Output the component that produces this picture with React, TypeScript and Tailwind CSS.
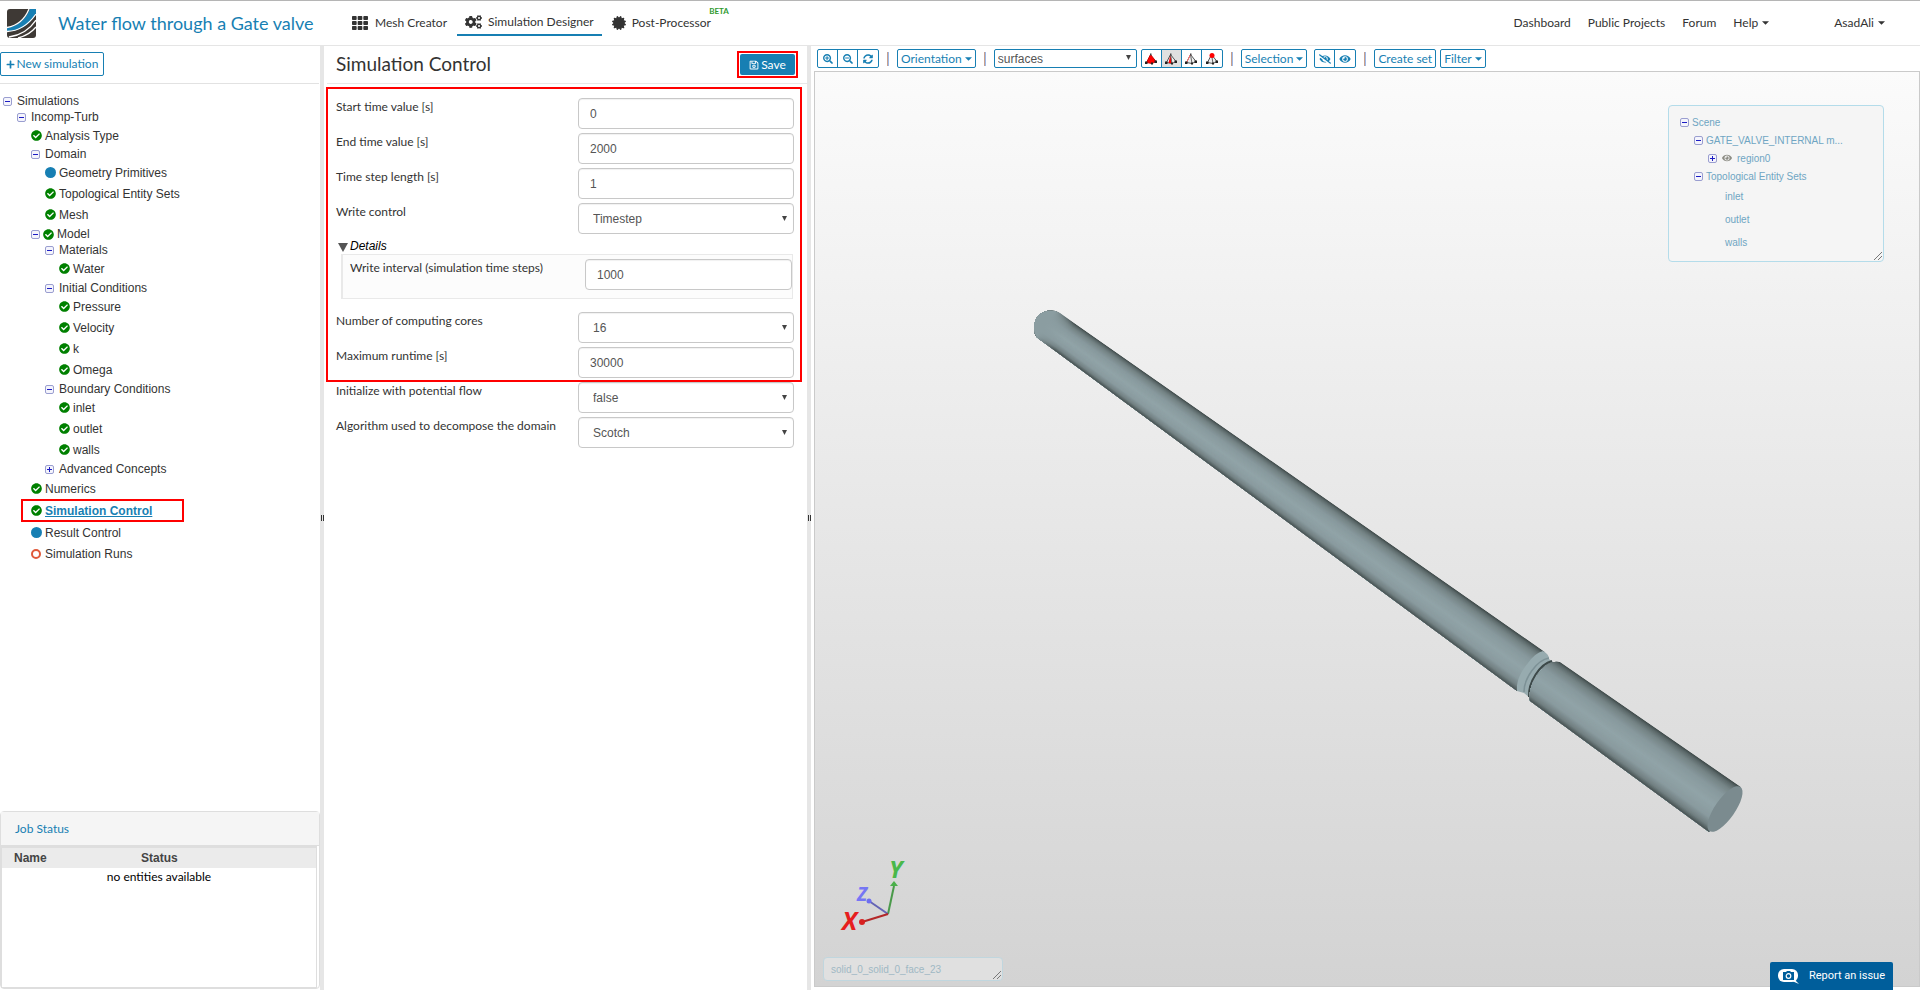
import { useState } from 'react';
import type { ReactNode } from 'react';
import {
  FaCertificate,
  FaCheckCircle,
  FaCogs,
  FaEye,
  FaEyeSlash,
  FaPlus,
  FaRegSave,
  FaSearchMinus,
  FaSearchPlus,
  FaSyncAlt,
  FaTh,
} from 'react-icons/fa';

type Status = 'ok' | 'info' | 'open';

interface TreeItem {
  label: string;
  status?: Status;
  toggle?: 'open' | 'closed';
  active?: boolean;
  children?: TreeItem[];
}

const leaf = (label: string, status: Status = 'ok'): TreeItem => ({ label, status });

const simulationTree: TreeItem[] = [
  {
    label: 'Simulations',
    toggle: 'open',
    children: [
      {
        label: 'Incomp-Turb',
        toggle: 'open',
        children: [
          leaf('Analysis Type'),
          {
            label: 'Domain',
            toggle: 'open',
            children: [leaf('Geometry Primitives', 'info'), leaf('Topological Entity Sets'), leaf('Mesh')],
          },
          {
            label: 'Model',
            toggle: 'open',
            status: 'ok',
            children: [
              { label: 'Materials', toggle: 'open', children: [leaf('Water')] },
              {
                label: 'Initial Conditions',
                toggle: 'open',
                children: [leaf('Pressure'), leaf('Velocity'), leaf('k'), leaf('Omega')],
              },
              {
                label: 'Boundary Conditions',
                toggle: 'open',
                children: [leaf('inlet'), leaf('outlet'), leaf('walls')],
              },
              { label: 'Advanced Concepts', toggle: 'closed' },
            ],
          },
          leaf('Numerics'),
          { label: 'Simulation Control', status: 'ok', active: true },
          leaf('Result Control', 'info'),
          leaf('Simulation Runs', 'open'),
        ],
      },
    ],
  },
];

function Caret() {
  return (
    <svg viewBox="0 0 8 4" className="w-[7px] h-1 shrink-0" fill="currentColor">
      <path d="M0 0h8L4 4z" />
    </svg>
  );
}

function ToggleIcon({ closed = false }: { closed?: boolean }) {
  return (
    <svg viewBox="0 0 9 9" className="w-[9px] h-[9px] shrink-0">
      <rect x="0.5" y="0.5" width="8" height="8" rx="1.5" fill="#f4f4fc" stroke="#9a9ed0" />
      <path d="M2 4.5h5" stroke="#1c1cc4" />
      {closed && <path d="M4.5 2v5" stroke="#1c1cc4" />}
    </svg>
  );
}

function StatusIcon({ status }: { status: Status }) {
  if (status === 'ok') return <FaCheckCircle className="w-[11px] h-[11px] shrink-0 text-[#008000]" />;
  if (status === 'info') return <span className="w-[11px] h-[11px] shrink-0 rounded-full bg-[#177fb3]" />;
  return <span className="w-[10px] h-[10px] mr-px shrink-0 rounded-full border-2 border-[#e0593a]" />;
}

function TreeNode({ item }: { item: TreeItem }) {
  const isBranch = Boolean(item.toggle);
  return (
    <li>
      {isBranch ? (
        <div className="flex items-center h-4">
          <ToggleIcon closed={item.toggle === 'closed'} />
          {item.status ? (
            <span className="flex items-center gap-[3px] ml-[3px]">
              <StatusIcon status={item.status} />
              {item.label}
            </span>
          ) : (
            <span className="ml-[5px]">{item.label}</span>
          )}
        </div>
      ) : item.active ? (
        <div className="flex items-center h-[23px] w-[163px] -ml-2.5 border-2 border-[#ff0000]">
          <a href="#control" className="flex items-center gap-[3px] ml-2 font-bold text-[#177fb3] underline">
            <StatusIcon status="ok" />
            {item.label}
          </a>
        </div>
      ) : (
        <div className="flex items-center gap-[3px] h-[21px]">
          {item.status && <StatusIcon status={item.status} />}
          {item.label}
        </div>
      )}
      {item.children && (
        <ul className="pl-3.5 pb-px">
          {item.children.map((child) => (
            <TreeNode key={child.label} item={child} />
          ))}
        </ul>
      )}
    </li>
  );
}

function Logo() {
  return (
    <svg viewBox="0 0 29 29" className="w-[29px] h-[29px]">
      <rect width="29" height="29" rx="3" fill="#3e3935" />
      <path d="M0 19C11 17 19 10 23 0h6v4C23 16 12 23 0 22z" fill="#177fb3" />
      <path d="M0 18.500C11 16.500 18 10 22 0" fill="none" stroke="#fff" strokeWidth="1.300" />
      <path d="M0 22.500C13 22 22 15 29 5" fill="none" stroke="#fff" strokeWidth="1.300" />
      <path d="M2 28C15 26 23 20 29 11" fill="none" stroke="#fff" strokeWidth="1.300" />
      <path d="M11 29C19 27 25 23 29 18" fill="none" stroke="#fff" strokeWidth="1.300" />
    </svg>
  );
}

function Header() {
  return (
    <header className="flex items-center h-[46px] shrink-0 border-t border-t-[#b5b5b5] border-b border-b-[#e5e5e5] pl-[7px] text-[#333]">
      <Logo />
      <h1 className="ml-[22px] w-[294px] text-[18px] text-[#177fb3]">Water flow through a Gate valve</h1>
      <nav className="flex items-center text-[12px]">
        <a href="#mesh" className="flex items-center gap-[7px] mr-2.5">
          <FaTh className="w-4 h-4" />
          Mesh Creator
        </a>
        <a href="#designer" className="flex items-center gap-1.5 h-[22px] mt-1 pb-1 px-2 border-b-2 border-[#177fb3]">
          <FaCogs className="w-[17px] h-4" />
          Simulation Designer
        </a>
        <a href="#post" className="relative flex items-center gap-1.5 ml-2.5">
          <FaCertificate className="w-[14px] h-[14px]" />
          Post-Processor
          <span className="absolute -right-[18px] -top-[7px] text-[8px] leading-none font-bold text-[#2f9a2f]">BETA</span>
        </a>
      </nav>
      <nav className="flex items-center gap-[17px] ml-auto mr-[35px] text-[12px]">
        <a href="#dashboard">Dashboard</a>
        <a href="#projects">Public Projects</a>
        <a href="#forum">Forum</a>
        <button type="button" className="flex items-center gap-1">
          Help <Caret />
        </button>
        <button type="button" className="flex items-center gap-1 ml-12">
          AsadAli <Caret />
        </button>
      </nav>
    </header>
  );
}

function Splitter() {
  return (
    <div className="flex items-center justify-end gap-px w-1 shrink-0 bg-[#e6e6e6]">
      <span className="w-px h-1.5 bg-[#333]" />
      <span className="w-px h-1.5 bg-[#333]" />
    </div>
  );
}

function Sidebar() {
  return (
    <aside className="flex flex-col w-80 shrink-0">
      <div className="h-[38px] pt-1.5 border-b border-[#e2e2e2] mr-px">
        <button
          type="button"
          className="flex items-center justify-center gap-0.5 w-[104px] h-6 rounded-xs border border-[#177fb3] text-[12px] text-[#177fb3]"
        >
          <FaPlus className="w-[9px] h-[9px]" />
          New simulation
        </button>
      </div>
      <ul className="flex-1 min-h-0 overflow-hidden pl-[3px] pt-[9px] font-['Liberation_Sans',Arial,sans-serif] text-[12px] text-[#333]">
        {simulationTree.map((item) => (
          <TreeNode key={item.label} item={item} />
        ))}
      </ul>
      <section className="flex flex-col h-[178px] shrink-0 mb-px border border-[#dedede] rounded-sm text-[12px]">
        <h2 className="flex items-center h-[34px] pl-3.5 bg-[#f5f5f5] border-b border-[#dedede] text-[#177fb3]">Job Status</h2>
        <div className="flex-1 mr-0.5 border border-t-2 border-[#dedede]">
          <table className="w-full text-left">
            <thead className="h-5 bg-[#ebebeb] font-['Liberation_Sans',Arial,sans-serif] text-[#444]">
              <tr>
                <th className="w-[127px] pl-3">Name</th>
                <th className="pl-3">Status</th>
              </tr>
            </thead>
            <tbody>
              <tr>
                <td colSpan={2} className="text-center">
                  no entities available
                </td>
              </tr>
            </tbody>
          </table>
        </div>
      </section>
    </aside>
  );
}

const fieldClass =
  "w-full h-[31px] rounded border border-[#c8c8c8] bg-white font-['Liberation_Sans',Arial,sans-serif] text-[12px] text-[#555] shadow-[inset_0_1px_1px_rgba(0,0,0,0.06)]";

interface FieldProps {
  id: string;
  label: string;
  value: string;
  options?: boolean;
  nested?: boolean;
}

function Field({ id, label, value, options = false, nested = false }: FieldProps) {
  return (
    <div className="flex items-start justify-between">
      <label htmlFor={id} className="leading-[18px]">
        {label}
      </label>
      <div className={nested ? 'relative w-[207px]' : 'relative w-[216px]'}>
        {options ? (
          <>
            <select id={id} defaultValue={value} className={`${fieldClass} appearance-none pl-3.5`}>
              <option>{value}</option>
            </select>
            <svg viewBox="0 0 5 5" className="absolute right-[7px] top-[13px] w-[5px] h-[5px]">
              <path d="M0 0h5L2.5 5z" fill="#444" />
            </svg>
          </>
        ) : (
          <input id={id} type="text" defaultValue={value} className={`${fieldClass} pl-[11px]`} />
        )}
      </div>
    </div>
  );
}

function ControlPanel() {
  return (
    <main className="w-[483px] shrink-0 text-[12px] text-[#333]">
      <div className="flex items-center justify-between h-[38px] ml-[3px] pl-[9px] pr-[9px] border-b border-[#e8e8e8]">
        <h2 className="text-[19px]">Simulation Control</h2>
        <div className="border-2 border-[#ff0000] p-px">
          <button
            type="button"
            className="flex items-center justify-center gap-0.5 w-[55px] h-[21px] rounded-xs bg-[#177fb3] text-white"
          >
            <FaRegSave className="w-2.5 h-2.5" />
            Save
          </button>
        </div>
      </div>
      <form>
        <div className="flex flex-col gap-1 mt-[3px] ml-0.5 mr-[5px] pt-[9px] pb-0.5 pl-2 pr-[6px] border-2 border-[#ff0000]">
          <Field id="start" label="Start time value [s]" value="0" />
          <Field id="end" label="End time value [s]" value="2000" />
          <Field id="step" label="Time step length [s]" value="1" />
          <Field id="write" label="Write control" value="Timestep" options />
          <details open className="mb-[9px]">
            <summary className="flex items-center gap-0.5 h-4 pl-0.5 list-none font-['Liberation_Sans',Arial,sans-serif] italic text-black">
              <svg viewBox="0 0 10 9" className="w-2.5 h-[9px] mt-0.5">
                <path d="M0 0h10L5 9z" fill="#555" />
              </svg>
              Details
            </summary>
            <div className="ml-[5px] mr-px h-[45px] pt-1 pl-[7px] bg-[#fcfcfc] border border-l-2 border-[#e9e9e9]">
              <Field id="interval" label="Write interval (simulation time steps)" value="1000" nested />
            </div>
          </details>
          <Field id="cores" label="Number of computing cores" value="16" options />
          <Field id="runtime" label="Maximum runtime [s]" value="30000" />
        </div>
        <div className="flex flex-col gap-1 pl-3 pr-[13px]">
          <Field id="potential" label="Initialize with potential flow" value="false" options />
          <Field id="algorithm" label="Algorithm used to decompose the domain" value="Scotch" options />
        </div>
      </form>
    </main>
  );
}

type Highlight = 'volume' | 'face' | 'edge' | 'vertex';

function PickIcon({ kind }: { kind: Highlight }) {
  return (
    <svg viewBox="0 0 12 12" className="w-3 h-3">
      <path
        d="M5.5 1.5L1.5 9.5L7 10.500L11 8.500z"
        fill={kind === 'volume' ? '#f00' : '#eee'}
        stroke={kind === 'volume' ? '#c00' : '#555'}
        strokeWidth="1"
      />
      {kind === 'face' && <path d="M5.5 1.5L3.5 10L7 10.500z" fill="#f00" />}
      <path d="M5.5 1.5L7 10.500" stroke={kind === 'volume' ? '#f00' : '#666'} strokeWidth="1" />
      {kind === 'edge' && <path d="M5.5 1.5L1.5 9.5" stroke="#f66" />}
      <path d="M0 8.500h2.500v2.500H0zM6 9.500h2v2H6zM9.500 7.500h2.500v2.500h-2.500z" fill="#222" />
      {kind === 'vertex' ? <circle cx="6" cy="2.500" r="2.500" fill="#f00" /> : <path d="M5 0.500h1.500v2H5z" fill="#444" />}
    </svg>
  );
}

function ButtonGroup({ children }: { children: ReactNode }) {
  return (
    <div className="flex h-[19px] rounded-xs border border-[#177fb3] divide-x divide-[#177fb3] text-[#177fb3]">{children}</div>
  );
}

function IconButton({ label, pressed = false, children }: { label: string; pressed?: boolean; children: ReactNode }) {
  return (
    <button
      type="button"
      aria-label={label}
      className={`flex items-center justify-center w-5 ${pressed ? 'bg-[#e0e0e0]' : ''}`}
    >
      {children}
    </button>
  );
}

function TextButton({ children }: { children: ReactNode }) {
  return (
    <button
      type="button"
      className="flex items-center gap-[3px] h-[19px] px-[3px] rounded-xs border border-[#177fb3] text-[#177fb3] whitespace-nowrap"
    >
      {children}
    </button>
  );
}

function Separator() {
  return <span className="w-0.5 h-3.5 mx-2 border-l border-l-[#c9a08c] border-r border-r-[#9bb8e8]" />;
}

function Toolbar() {
  return (
    <div className="flex items-center h-[25px] pl-1.5 text-[12px]">
      <ButtonGroup>
        <IconButton label="Zoom in">
          <FaSearchPlus className="w-2.5 h-2.5" />
        </IconButton>
        <IconButton label="Zoom out">
          <FaSearchMinus className="w-2.5 h-2.5" />
        </IconButton>
        <IconButton label="Reset view">
          <FaSyncAlt className="w-2.5 h-2.5" />
        </IconButton>
      </ButtonGroup>
      <Separator />
      <TextButton>
        Orientation <Caret />
      </TextButton>
      <Separator />
      <div className="relative mr-1">
        <select
          aria-label="Render mode"
          defaultValue="surfaces"
          className="appearance-none block w-[143px] h-[19px] pl-[3px] rounded-xs border border-[#177fb3] bg-white font-['Liberation_Sans',Arial,sans-serif] text-[12px] text-[#555]"
        >
          <option>surfaces</option>
        </select>
        <svg viewBox="0 0 5 5" className="absolute right-1.5 top-1.5 w-[5px] h-[5px]">
          <path d="M0 0h5L2.500 5z" fill="#444" />
        </svg>
      </div>
      <ButtonGroup>
        <IconButton label="Pick volume">
          <PickIcon kind="volume" />
        </IconButton>
        <IconButton label="Pick face" pressed>
          <PickIcon kind="face" />
        </IconButton>
        <IconButton label="Pick edge">
          <PickIcon kind="edge" />
        </IconButton>
        <IconButton label="Pick vertex">
          <PickIcon kind="vertex" />
        </IconButton>
      </ButtonGroup>
      <Separator />
      <TextButton>
        Selection <Caret />
      </TextButton>
      <div className="ml-[7px]">
        <ButtonGroup>
          <IconButton label="Hide selection">
            <FaEyeSlash className="w-3 h-2.5" />
          </IconButton>
          <IconButton label="Show all">
            <FaEye className="w-3 h-2.5" />
          </IconButton>
        </ButtonGroup>
      </div>
      <Separator />
      <div className="flex gap-1">
        <TextButton>Create set</TextButton>
        <TextButton>
          Filter <Caret />
        </TextButton>
      </div>
    </div>
  );
}

type Point = [number, number];

const shadeStops: [number, number[]][] = [
  [0, [66, 77, 77]],
  [0.05, [92, 105, 106]],
  [0.14, [117, 132, 134]],
  [0.3, [136, 153, 157]],
  [0.55, [145, 164, 168]],
  [0.78, [138, 155, 159]],
  [0.92, [114, 128, 130]],
  [1, [76, 87, 88]],
];

function shade(t: number) {
  const i = Math.max(1, shadeStops.findIndex(([stop]) => stop >= t));
  const [t0, a] = shadeStops[i - 1];
  const [t1, b] = shadeStops[i];
  const k = (t - t0) / (t1 - t0);
  return `rgb(${a.map((c, n) => Math.round(c + (b[n] - c) * k)).join(',')})`;
}

// each strip runs down to the lower edge, the next one is painted over it
function Pipe({ top, bottom }: { top: [Point, Point]; bottom: [Point, Point] }) {
  const steps = 48;
  const at = (side: 0 | 1, t: number) =>
    `${top[side][0] + (bottom[side][0] - top[side][0]) * t},${top[side][1] + (bottom[side][1] - top[side][1]) * t}`;
  return (
    <g>
      {Array.from({ length: steps }, (_, i) => (
        <polygon
          key={i}
          points={`${at(0, i / steps)} ${at(1, i / steps)} ${at(1, 1)} ${at(0, 1)}`}
          fill={shade(i / (steps - 1))}
        />
      ))}
    </g>
  );
}

function Model() {
  return (
    <svg viewBox="815 72 1104 914" className="absolute inset-0 w-full h-full">
      <defs>
        <clipPath id="narrow">
          <path d="M1060 313L1545 652L1517 691L1040 340C1037 338 1034 335 1034 328C1034 312 1050 307 1060 313z" />
        </clipPath>
        <clipPath id="wide">
          <path d="M1560 662L1741 787L1709 832L1530 701C1528 690 1534 678 1541 671Q1549 660 1560 662z" />
        </clipPath>
        <linearGradient id="cap" gradientUnits="userSpaceOnUse" x1="1047" y1="322" x2="1066" y2="336">
          <stop offset="0" stopColor="#8b9da1" />
          <stop offset="1" stopColor="#8b9da1" stopOpacity="0" />
        </linearGradient>
      </defs>
      <g clipPath="url(#narrow)">
        <Pipe top={[[1027, 290], [1545, 652]]} bottom={[[1008, 316], [1517, 691]]} />
        <rect x="1030" y="300" width="60" height="60" fill="url(#cap)" />
      </g>
      <path d="M1543 651Q1549 654 1549 659L1553 662L1530 698L1524 693L1517 691C1516 680 1522 670 1528 663Q1535 653 1543 651z" fill="#97abaf" />
      <path d="M1549 658C1537 660 1524 678 1524 692" fill="none" stroke="#7d9196" strokeWidth="1.500" />
      <path d="M1552 661C1540 664 1528 682 1529 697" fill="none" stroke="#3d4949" strokeWidth="2" />
      <g clipPath="url(#wide)">
        <Pipe top={[[1530, 641], [1741, 787]]} bottom={[[1500, 679], [1709, 832]]} />
      </g>
      <ellipse cx="1725" cy="809" rx="27" ry="10" transform="rotate(-55 1725 809)" fill="#7b8b8f" />

      <g strokeWidth="2" fontFamily="'Open Sans', sans-serif" fontWeight="bold" fontStyle="italic">
        <path d="M888 914L894 886" stroke="#4a9a4a" />
        <path d="M890 886L894 881L898 886z" fill="#4ab04a" />
        <path d="M888 914L869 901" stroke="#6464b4" />
        <circle cx="869" cy="901" r="2.500" fill="#6e6ef0" />
        <path d="M888 914L862 922" stroke="#b42828" />
        <circle cx="862" cy="922" r="3" fill="#d82020" />
        <text x="889" y="878" fontSize="24" fill="#4ab84a">Y</text>
        <text x="857" y="901" fontSize="19" fill="#7676f4">Z</text>
        <text x="842" y="930" fontSize="25" fill="#e61e1e">X</text>
      </g>
    </svg>
  );
}

function Grip() {
  return (
    <svg viewBox="0 0 8 8" className="absolute right-px bottom-px w-2 h-2" stroke="#777">
      <path d="M0 8L8 0M4 8L8 4" />
    </svg>
  );
}

function ScenePanel() {
  return (
    <div className="absolute right-[35px] top-[33px] w-[216px] h-[157px] rounded border border-[#b4dcea] bg-[#f5f5f5] pl-[11px] pt-2 font-['Liberation_Sans',Arial,sans-serif] text-[10px] text-[#6fa5c3]">
      <div className="flex items-center gap-[3px] h-[17px]">
        <ToggleIcon /> Scene
      </div>
      <div className="flex items-center gap-[3px] h-[18px] pl-3.5">
        <ToggleIcon /> GATE_VALVE_INTERNAL m...
      </div>
      <div className="flex items-center h-[18px] pl-7">
        <ToggleIcon closed />
        <FaEye className="w-2.5 h-2.5 ml-[5px] mr-[5px] text-[#8d8d85]" />
        region0
      </div>
      <div className="flex items-center gap-[3px] h-[18px] pl-3.5">
        <ToggleIcon /> Topological Entity Sets
      </div>
      <ul className="pl-[45px] leading-[23px]">
        <li>inlet</li>
        <li>outlet</li>
        <li>walls</li>
      </ul>
      <Grip />
    </div>
  );
}

function Viewer() {
  const [picked] = useState('solid_0_solid_0_face_23');
  return (
    <section className="flex flex-col flex-1 min-w-0">
      <Toolbar />
      <div className="relative flex-1 ml-[3px] mb-[3px] border border-[#cacaca] bg-linear-to-b from-[#fbfbfb] to-[#d3d3d3]">
        <Model />
        <ScenePanel />
        <div className="absolute left-2 bottom-[5px] flex items-center w-[180px] h-6 pl-[7px] rounded border border-[#c0d6de] bg-[#e0e0e0] font-['Liberation_Sans',Arial,sans-serif] text-[10px] text-[#9fb8c4]">
          {picked}
          <Grip />
        </div>
      </div>
    </section>
  );
}

export default function App() {
  return (
    <div className="flex flex-col h-screen overflow-hidden bg-white font-[Lato,sans-serif]">
      <Header />
      <div className="flex flex-1 min-h-0">
        <Sidebar />
        <Splitter />
        <ControlPanel />
        <Splitter />
        <Viewer />
      </div>
      <button
        type="button"
        className="fixed right-[27px] bottom-0 flex items-center gap-2.5 h-7 px-2 rounded-t-xs bg-[#005e9b] font-[Roboto,sans-serif] text-[11px] text-white"
      >
        <svg viewBox="0 0 21 15" className="w-[21px] h-[15px]">
          <rect width="20" height="13" rx="6" fill="#fff" />
          <path d="M14 12h4l3 3z" fill="#fff" />
          <path d="M5 3h3l1-1h3l1 1h3v8H5z" fill="#005e9b" />
          <circle cx="10.500" cy="7" r="2.300" fill="none" stroke="#fff" strokeWidth="1.200" />
        </svg>
        Report an issue
      </button>
    </div>
  );
}
